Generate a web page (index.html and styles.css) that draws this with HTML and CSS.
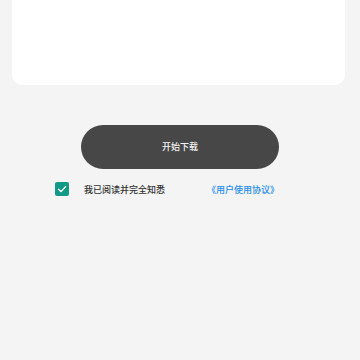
FILE: index.html
```html
<!DOCTYPE html>
<html lang="zh">
<head>
<meta charset="utf-8">
<link rel="stylesheet" href="styles.css">
</head>
<body>
<div class="card"></div>
<div class="actions">
  <button class="download">开始下载</button>
  <div class="agree">
    <span class="check">
      <svg width="10" height="10" viewBox="0 0 10 10"><path d="M1.5 5.2 L4 7.6 L8.6 2.6" fill="none" stroke="#fff" stroke-width="1.4" stroke-linecap="round" stroke-linejoin="round"/></svg>
    </span>
    <span class="label">我已阅读并完全知悉</span>
    <a class="link">《用户使用协议》</a>
  </div>
</div>
</body>
</html>
```
FILE: styles.css
```css
html, body {
  margin: 0;
  padding: 0;
  background: #f4f4f4;
  font-family: "Noto Sans CJK SC", "Noto Sans", sans-serif;
}
.card {
  margin: 0 15px 0 12px;
  height: 85px;
  background: #ffffff;
  border-radius: 0 0 10px 10px;
}
.actions {
  display: flex;
  flex-direction: column;
  align-items: center;
  padding-top: 40px;
}
.download {
  width: 198px;
  height: 44px;
  border: none;
  border-radius: 22px;
  background: #474747;
  color: #f2f2f2;
  font-family: inherit;
  font-size: 9px;
  font-weight: 500;
  padding: 0 0 2px 0;
}
.agree {
  align-self: stretch;
  display: flex;
  align-items: center;
  margin-top: 13px;
  padding: 0 81px 0 55px;
  height: 14px;
}
.check {
  width: 14px;
  height: 14px;
  border-radius: 2px;
  background: #129a86;
  display: flex;
  align-items: center;
  justify-content: center;
}
.label {
  margin-left: 15px;
  font-size: 9px;
  font-weight: 500;
  color: #333;
}
.link {
  margin-left: auto;
  font-size: 9px;
  font-weight: 500;
  color: #1e8cf0;
}
```
